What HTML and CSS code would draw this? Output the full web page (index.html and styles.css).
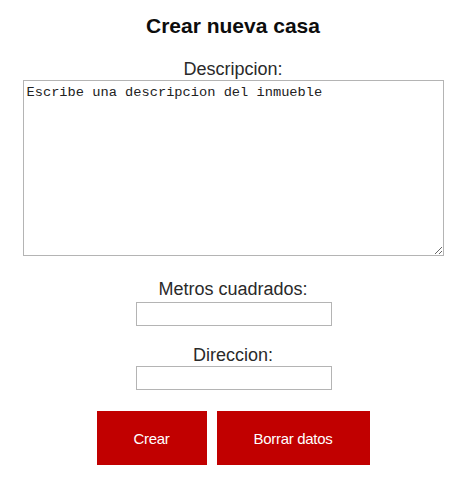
FILE: index.html
```html
<!DOCTYPE html>
<html lang="es">
<head>
<meta charset="utf-8">
<title>Crear nueva casa</title>
<link rel="stylesheet" href="styles.css">
</head>
<body>
<form class="form">
  <h1 class="title">Crear nueva casa</h1>
  <label class="label label-desc" for="desc">Descripcion:</label>
  <textarea id="desc" class="textarea">Escribe una descripcion del inmueble</textarea>
  <label class="label label-m2" for="m2">Metros cuadrados:</label>
  <input id="m2" class="input" type="text">
  <label class="label label-dir" for="dir">Direccion:</label>
  <input id="dir" class="input" type="text">
  <div class="actions">
    <button type="button" class="btn btn-crear">Crear</button>
    <button type="button" class="btn btn-borrar">Borrar datos</button>
  </div>
</form>
</body>
</html>
```

FILE: styles.css
```css
html, body {
  margin: 0;
  padding: 0;
  background: #ffffff;
}
body {
  font-family: "Liberation Sans", Arial, sans-serif;
  color: #222;
}
.form {
  display: flex;
  flex-direction: column;
  align-items: center;
  width: 466px;
}
.title {
  margin: 14px 0 0;
  font-size: 21px;
  line-height: 24px;
  font-weight: bold;
  color: #0d0d0d;
}
.label {
  display: block;
  font-size: 18px;
  line-height: 21px;
  color: #2a2a2a;
}
.label-desc {
  margin-top: 21px;
}
.label-m2 {
  margin-top: 23px;
  margin-bottom: 2px;
}
.label-dir {
  margin-top: 19px;
}
.textarea {
  display: block;
  box-sizing: border-box;
  width: 421px;
  height: 176px;
  margin: 0;
  padding: 4px 3px;
  border: 1px solid #b4b4b4;
  font-family: "Liberation Mono", "DejaVu Sans Mono", monospace;
  font-size: 13.7px;
  line-height: 15px;
  color: #222;
  background: #fff;
}
.input {
  display: block;
  box-sizing: border-box;
  width: 196px;
  height: 24px;
  margin: 0 0 0 1px;
  padding: 1px 3px;
  border: 1px solid #b4b4b4;
  background: #fff;
}
.actions {
  display: flex;
  gap: 10px;
  margin-top: 21px;
}
.btn {
  height: 54px;
  border: none;
  background: #c10000;
  color: #fff;
  font-family: "Liberation Sans", Arial, sans-serif;
  font-size: 15px;
  letter-spacing: -0.3px;
  padding: 0;
}
.btn-crear {
  width: 110px;
}
.btn-borrar {
  width: 153px;
}
```
